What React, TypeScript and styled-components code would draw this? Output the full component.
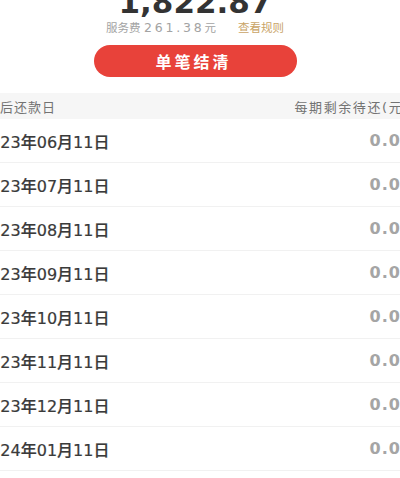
import styled, { createGlobalStyle } from 'styled-components';

const GlobalStyle = createGlobalStyle`
  html, body {
    margin: 0;
    padding: 0;
    background: #ffffff;
    overflow: hidden;
  }
  body {
    font-family: "DejaVu Sans", "Noto Sans CJK SC", sans-serif;
  }
`;

const schedule = [
  '2023年06月11日',
  '2023年07月11日',
  '2023年08月11日',
  '2023年09月11日',
  '2023年10月11日',
  '2023年11月11日',
  '2023年12月11日',
  '2024年01月11日',
  '2024年02月11日',
];

export default function App() {
  return (
    <Viewport>
      <GlobalStyle />
      <Page>
        <Summary>
          <Total>1,822.87</Total>
          <FeeLine>
            服务费 <FeeNum>261.38</FeeNum>元<RuleLink>查看规则</RuleLink>
          </FeeLine>
          <SettleButton>单笔结清</SettleButton>
        </Summary>
        <TableHead>
          <HeadCell>最后还款日</HeadCell>
          <HeadCell $right>每期剩余待还(元)</HeadCell>
        </TableHead>
        {schedule.map((date) => (
          <Row key={date}>
            <DateText>{date}</DateText>
            <Amount>0.00</Amount>
          </Row>
        ))}
      </Page>
    </Viewport>
  );
}

const Viewport = styled.div`
  width: 400px;
  height: 478px;
  overflow: hidden;
`;

const Page = styled.div`
  width: 456px;
  margin-left: -33px;
  display: flex;
  flex-direction: column;
`;

const Summary = styled.div`
  display: flex;
  flex-direction: column;
  align-items: center;
  margin-top: -16px;
`;

const Total = styled.div`
  font-size: 31px;
  line-height: 36px;
  font-weight: 700;
  color: #333333;
`;

const FeeLine = styled.div`
  font-size: 11.5px;
  line-height: 16px;
  color: #a3a3a3;
  white-space: nowrap;
`;

const FeeNum = styled.span`
  font-size: 12.5px;
  letter-spacing: 2.8px;
`;

const RuleLink = styled.span`
  margin-left: 22px;
  color: #c9a466;
`;

const SettleButton = styled.button`
  margin-top: 9px;
  width: 203px;
  height: 32px;
  border: none;
  border-radius: 16px;
  background: #e8423a;
  color: #ffffff;
  font-family: inherit;
  font-size: 16px;
  font-weight: 700;
  letter-spacing: 3px;
  padding-left: 3px;
`;

const TableHead = styled.div`
  margin-top: 16px;
  height: 26px;
  display: flex;
  align-items: center;
  justify-content: space-between;
  padding: 0 13px 0 19px;
  background: #f6f6f6;
`;

const HeadCell = styled.span<{ $right?: boolean }>`
  font-size: 13px;
  letter-spacing: ${(p) => (p.$right ? '1.6px' : '1px')};
  color: #737373;
`;

const Row = styled.div`
  height: 43px;
  display: flex;
  align-items: center;
  justify-content: space-between;
  padding: 0 10px 0 13px;
  border-bottom: 1px solid #f1f1f1;
`;

const DateText = styled.span`
  font-size: 16px;
  font-weight: 500;
  color: #3a3a3a;
  -webkit-text-stroke: 0.2px currentColor;
`;

const Amount = styled.span`
  font-size: 16px;
  font-weight: 700;
  letter-spacing: 1px;
  color: #a5a5a5;
`;
